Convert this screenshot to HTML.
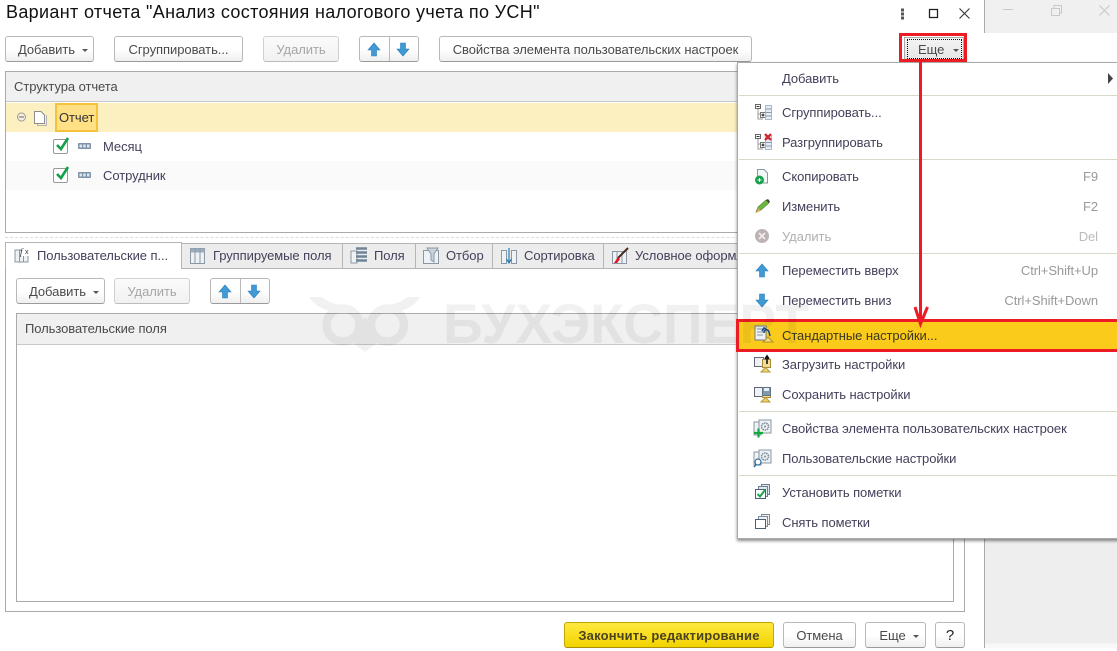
<!DOCTYPE html>
<html lang="ru"><head><meta charset="utf-8"><title>Вариант отчета</title>
<style>
html,body{margin:0;padding:0;background:#fff}
body{position:relative;width:1117px;height:651px;overflow:hidden;font-family:"Liberation Sans",Arial,sans-serif;font-size:13px;color:#4a4a4a}
.a,.t,.b{position:absolute;box-sizing:border-box}
.t{white-space:nowrap;line-height:14px;height:14px;letter-spacing:-.07px}
.b{height:26px;border:1px solid #b9b9b9;border-bottom-color:#9a9a9a;border-radius:3px;background:linear-gradient(#fff,#fff 50%,#efefef);text-align:center;line-height:25px;white-space:nowrap;letter-spacing:-.05px;color:#4a4a4a}
.dd{padding-left:7px}
.dis{color:#a6a6a6;border-color:#d0d0d0;border-bottom-color:#bbb;background:linear-gradient(#fbfbfb,#f1f1f1)}
.m{color:#45405a}
.sep{position:absolute;left:739px;right:0;height:1px;background:#dcd8c9}
.car{display:inline-block;width:0;height:0;border:3px solid transparent;border-top:3px solid #555;border-bottom:0;margin-left:7px;vertical-align:2px}
.tab{position:absolute;top:243px;height:26px;box-sizing:border-box;background:#ececec;border:1px solid #b5b5b5;border-left:0}
</style></head><body>

<div class="t" style="left:6px;top:1px;height:22px;line-height:22px;font-size:18px;color:#111;letter-spacing:.335px">Вариант отчета "Анализ состояния налогового учета по УСН"</div>

<!-- right background window -->
<div class="a" style="left:984px;top:0;width:133px;height:33px;background:#f0f0f0;border-left:1px solid #aaa"></div>
<div class="a" style="left:984px;top:539px;width:133px;height:109px;background:linear-gradient(#eee,#eee 96%,#f8f8f8 96%);border-left:1px solid #aaa"></div>

<!-- toolbar -->
<div class="b dd" style="left:5px;top:36px;width:89px">Добавить<i class="car"></i></div>
<div class="b" style="left:114px;top:36px;width:129px">Сгруппировать...</div>
<div class="b dis" style="left:263px;top:36px;width:76px">Удалить</div>
<div class="b" style="left:359px;top:36px;width:60px"></div>
<div class="a" style="left:389px;top:37px;width:1px;height:24px;background:#b9b9b9"></div>
<div class="b" style="left:439px;top:36px;width:313px">Свойства элемента пользовательских настроек</div>

<!-- structure panel -->
<div class="a" style="left:5px;top:71px;width:960px;height:162px;border:1px solid #aaa;background:#fff"></div>
<div class="a" style="left:6px;top:72px;width:958px;height:30px;background:#f0f0f0;border-bottom:1px solid #c8c8c8"></div>
<div class="t" style="left:14px;top:80px">Структура отчета</div>
<div class="a" style="left:6px;top:103px;width:958px;height:29px;background:#fdf0c0"></div>
<div class="a" style="left:55px;top:103px;width:43px;height:29px;background:#ffe084;border:2px solid #f5c33b"></div>
<div class="t" style="left:59px;top:111px;color:#333">Отчет</div>
<div class="a" style="left:6px;top:161px;width:958px;height:29px;background:#fafafa"></div>
<div class="t m" style="left:103px;top:140px">Месяц</div>
<div class="t m" style="left:103px;top:169px">Сотрудник</div>
<div class="a" style="left:53px;top:139px;width:15px;height:15px;border:1px solid #999;border-radius:2px;background:#fff"></div>
<div class="a" style="left:53px;top:168px;width:15px;height:15px;border:1px solid #999;border-radius:2px;background:#fff"></div>

<!-- tabs -->
<div class="a" style="left:5px;top:237px;width:960px;height:0;border-top:1px dashed #ddd"></div>
<div class="a" style="left:5px;top:268px;width:960px;height:344px;border:1px solid #aaa;background:#fff"></div>
<div class="tab" style="left:181px;width:162px"></div>
<div class="tab" style="left:343px;width:73px"></div>
<div class="tab" style="left:416px;width:77px"></div>
<div class="tab" style="left:493px;width:111px"></div>
<div class="tab" style="left:604px;width:140px"></div>
<div class="a" style="left:5px;top:242px;width:177px;height:27px;background:#fff;border:1px solid #b5b5b5;border-bottom:0"></div>
<div class="t m" style="left:37px;top:249px">Пользовательские п...</div>
<div class="t m" style="left:213px;top:249px">Группируемые поля</div>
<div class="t m" style="left:374px;top:249px">Поля</div>
<div class="t m" style="left:446px;top:249px">Отбор</div>
<div class="t m" style="left:524px;top:249px">Сортировка</div>
<div class="t m" style="left:635px;top:249px">Условное оформление</div>

<!-- inner toolbar -->
<div class="b dd" style="left:16px;top:278px;width:89px">Добавить<i class="car"></i></div>
<div class="b dis" style="left:114px;top:278px;width:76px">Удалить</div>
<div class="b" style="left:210px;top:278px;width:60px"></div>
<div class="a" style="left:240px;top:279px;width:1px;height:24px;background:#b9b9b9"></div>

<!-- inner table -->
<div class="a" style="left:16px;top:313px;width:938px;height:289px;border:1px solid #aaa;background:#fff"></div>
<div class="a" style="left:17px;top:314px;width:936px;height:31px;background:#f0f0f0;border-bottom:1px solid #c8c8c8"></div>
<div class="t" style="left:25px;top:322px">Пользовательские поля</div>

<!-- footer -->
<div class="b" style="left:564px;top:622px;width:210px;border-color:#c4a800;border-bottom-color:#a89000;background:linear-gradient(#ffe93f,#f2d300);font-weight:bold;color:#4a4320;letter-spacing:.2px">Закончить редактирование</div>
<div class="b" style="left:783px;top:622px;width:73px">Отмена</div>
<div class="b dd" style="left:865px;top:622px;width:61px">Еще<i class="car"></i></div>
<div class="b" style="left:935px;top:622px;width:30px;font-size:15px;color:#222">?</div>

<!-- Еще button active -->
<div class="a" style="left:904px;top:37px;width:60px;height:25px;background:linear-gradient(#f4f4f4,#e6e6e6);border:1px solid #aaa"></div>
<div class="a" style="left:907px;top:39px;width:55px;height:20px;border:1px dotted #111"></div>
<div class="t" style="left:918px;top:43px">Еще</div>
<div class="a" style="left:953px;top:49px;width:0;height:0;border:3px solid transparent;border-top:3px solid #555;border-bottom:0"></div>

<!-- dropdown menu -->
<div class="a" style="left:737px;top:62px;width:390px;height:477px;background:#fff;border:1px solid #aaa;box-shadow:0 2px 3px rgba(0,0,0,.45)"></div>
<div class="sep" style="top:95px"></div>
<div class="sep" style="top:159px"></div>
<div class="sep" style="top:253px"></div>
<div class="sep" style="top:411px"></div>
<div class="sep" style="top:475px"></div>
<div class="a" style="left:736px;top:319px;width:381px;height:33px;background:#fbcb1c;border:3px solid #ed1c24;border-right-width:0"></div>

<div class="t m" style="left:782px;top:72px">Добавить</div>
<div class="t m" style="left:782px;top:106px">Сгруппировать...</div>
<div class="t m" style="left:782px;top:136px">Разгруппировать</div>
<div class="t m" style="left:782px;top:170px">Скопировать</div>
<div class="t m" style="left:782px;top:200px">Изменить</div>
<div class="t" style="left:782px;top:230px;color:#b0b0b0">Удалить</div>
<div class="t m" style="left:782px;top:264px">Переместить вверх</div>
<div class="t m" style="left:782px;top:294px">Переместить вниз</div>
<div class="t" style="left:782px;top:329px;color:#3c3720">Стандартные настройки...</div>
<div class="t m" style="left:782px;top:358px">Загрузить настройки</div>
<div class="t m" style="left:782px;top:388px">Сохранить настройки</div>
<div class="t m" style="left:782px;top:422px">Свойства элемента пользовательских настроек</div>
<div class="t m" style="left:782px;top:452px">Пользовательские настройки</div>
<div class="t m" style="left:782px;top:486px">Установить пометки</div>
<div class="t m" style="left:782px;top:516px">Снять пометки</div>

<div class="t" style="right:19px;top:170px;color:#999">F9</div>
<div class="t" style="right:19px;top:200px;color:#999">F2</div>
<div class="t" style="right:19px;top:230px;color:#bbb">Del</div>
<div class="t" style="right:19px;top:264px;color:#999">Ctrl+Shift+Up</div>
<div class="t" style="right:19px;top:294px;color:#999">Ctrl+Shift+Down</div>

<!-- icons, watermark, callouts -->
<svg class="a" style="left:0;top:0" width="1117" height="651" viewBox="0 0 1117 651" fill="none">
<defs>
<path id="up" d="M0-7 6 0H2.500V6H-2.500V0H-6Z" fill="#3f9ad6" stroke="#2a7fb8" stroke-width=".6"/>
<path id="dn" d="M0 7 6 0H2.500V-6H-2.500V0H-6Z" fill="#3f9ad6" stroke="#2a7fb8" stroke-width=".6"/>
<g id="chk"><path d="M3 7 7 11 14 0" stroke="#14a04a" stroke-width="2.600"/></g>
<g id="fld"><rect x="0" y="0" width="13" height="6" rx="1" fill="#7f93a8"/><rect x="1.500" y="1.500" width="2.500" height="3" fill="#dfe6ee"/><rect x="5.200" y="1.500" width="2.500" height="3" fill="#dfe6ee"/><rect x="9" y="1.500" width="2.500" height="3" fill="#dfe6ee"/></g>
<g id="grp"><rect x=".5" y=".5" width="5" height="4" fill="#fff" stroke="#666"/><path d="M1.500 2.500H4.500" stroke="#333"/><path d="M3 5V15H8M3 10H6" stroke="#999"/><rect x="5.500" y="8.500" width="5" height="5" fill="#fff" stroke="#777"/><path d="M6.500 11H9.500M8 9.500V12.500" stroke="#111"/><rect x="10.500" y="1.500" width="6" height="14" fill="#e6ecf2" stroke="#a9bac9"/><path d="M10.500 5H16.500M10.500 8.500H16.500M10.500 12H16.500" stroke="#7f9bb5"/></g>
<g id="cfg"><rect x="0" y="2" width="7" height="13" fill="#eef2f5" stroke="#8a98a5"/><rect x="5" y="0" width="12" height="13" fill="#eef2f5" stroke="#8a98a5"/><circle cx="11" cy="6.500" r="3.500" stroke="#7d8a95" stroke-width="1.600" stroke-dasharray="1.500 .7"/><circle cx="11" cy="6.500" r="1" fill="#7d8a95"/></g>
<g id="tbl"><rect x="0" y="3" width="13" height="12" fill="#eef2f5" stroke="#8a98a5"/><path d="M4.500 3V15M8.500 3V15" stroke="#8a98a5"/></g>
<g id="set"><rect x=".5" y="1.500" width="9" height="9" fill="#eef2f5" stroke="#667"/><rect x="8.500" y="3.500" width="8" height="8" fill="#f2dc9a" stroke="#a88c3a"/><path d="M7 16 11.500 11.500 16 16Z" fill="#f3d26a" stroke="#b79a3d"/></g>
</defs>

<!-- window controls -->
<g fill="#555"><rect x="901" y="8.500" width="3" height="3"/><rect x="901" y="12.500" width="3" height="3"/><rect x="901" y="16.500" width="3" height="3"/></g>
<rect x="929.500" y="9.500" width="8" height="8" stroke="#222" stroke-width="1.300"/>
<path d="M959.500 8.500 969.500 18.500M969.500 8.500 959.500 18.500" stroke="#333" stroke-width="1.100"/>
<path d="M1003 9.500H1013" stroke="#c8c8c8"/>
<path d="M1051.500 8.500H1059.500V15.500H1051.500ZM1054 8V5.500H1061.500V13H1060" stroke="#c8c8c8"/>
<path d="M1099.500 5.500 1109.500 15.500M1109.500 5.500 1099.500 15.500" stroke="#c8c8c8" stroke-width="1.100"/>

<!-- toolbar arrows -->
<use href="#up" x="374" y="50"/><use href="#dn" x="403" y="49"/>
<use href="#up" x="225" y="292"/><use href="#dn" x="254" y="291"/>

<!-- tree -->
<circle cx="21.500" cy="117" r="4" fill="#f5f0e0" stroke="#999"/><path d="M19 117H24" stroke="#666"/>
<path d="M37.500 113.500V125.500H46.500V115" stroke="#b5b5b5"/><path d="M34.500 111.500H41L44.500 115V123.500H34.500Z" fill="#fff" stroke="#8d8d8d"/>
<use href="#chk" x="54" y="138"/><use href="#chk" x="54" y="167"/>
<use href="#fld" x="78" y="143"/><use href="#fld" x="78" y="172"/>

<!-- tab icons -->
<g transform="translate(15,247)"><use href="#tbl"/><rect x="6" y="0" width="10" height="9" fill="#fff"/><text x="5" y="8" font-size="9" fill="#333" font-family="Liberation Serif" font-style="italic">f</text><text x="10" y="7" font-size="7" fill="#333" font-family="Liberation Sans">x</text></g>
<g transform="translate(190,248)"><rect x=".5" y=".5" width="14" height="15" fill="#eef2f5" stroke="#8a98a5"/><rect x=".5" y=".5" width="14" height="4" fill="#9aabbb"/><path d="M5 .5V15.500M10 .5V15.500" stroke="#8a98a5"/></g>
<g transform="translate(351,247)"><rect x="0" y="4" width="6" height="12" fill="#eef2f5" stroke="#8a98a5"/><path d="M5 1.500H16M5 5.500H16M5 9.500H16M5 13.500H16" stroke="#6f8397" stroke-width="2.400"/></g>
<g transform="translate(423,247)"><rect x=".5" y="3.500" width="15" height="13" fill="#eef2f5" stroke="#8a98a5"/><path d="M4 1H15L11 7V15L8 13V7Z" fill="#c9d2da" stroke="#8a98a5"/></g>
<g transform="translate(501,247)"><rect x=".5" y="3.500" width="5" height="13" fill="#eef2f5" stroke="#8a98a5"/><rect x="10.500" y="3.500" width="5" height="13" fill="#eef2f5" stroke="#8a98a5"/><path d="M8 1V15M5.500 12 8 16 10.500 12" stroke="#2f7ab0" stroke-width="1.200"/></g>
<g transform="translate(612,247)"><rect x=".5" y="4.500" width="14" height="12" fill="#eef2f5" stroke="#8a98a5"/><path d="M5 4.500V16.500M10 4.500V16.500" stroke="#8a98a5"/><path d="M16 1 6 11" stroke="#4a2d20" stroke-width="2"/><path d="M2 16 6 10 8 12 5 16Z" fill="#e3141f"/></g>

<!-- menu icons -->
<use href="#grp" x="755" y="104"/>
<g transform="translate(755,134)"><use href="#grp"/><path d="M10 0 16 6M16 0 10 6" stroke="#d4202a" stroke-width="2.200"/></g>
<g transform="translate(755,169)"><path d="M2.500 .5H9L12.500 4V14H2.500Z" fill="#f4f6f8" stroke="#8a98a5"/><circle cx="4.500" cy="11" r="4.500" fill="#18a24d"/><path d="M2.500 11H6.500M4.500 9V13" stroke="#fff"/></g>
<g transform="translate(755,199)"><path d="M1 13 3 8 11 1 14 4 6 11Z" fill="#6fb63f" stroke="#47802a" stroke-width=".6"/><path d="M11 1 14 4 15 2.500 13 0Z" fill="#444"/><path d="M1 14 3 9 6 11.500Z" fill="#dca060"/></g>
<circle cx="762" cy="236" r="7" fill="#bdb3b3"/><path d="M759 233 765 239M765 233 759 239" stroke="#f2efef" stroke-width="1.600"/>
<use href="#up" x="762" y="271"/><use href="#dn" x="762" y="300"/>
<g transform="translate(754,326)"><path d="M1 0H12V14H1Z" fill="#eef2f5" stroke="#6d7f90"/><path d="M3 3H10M3 6H10M3 9H9" stroke="#8a98a5"/><path d="M9 16 14 11 19 16Z" fill="#f7dc7a" stroke="#b08e2c"/><path d="M10 7C10 3 14 3 15 6L16 10M8 5 10 2 13 4" stroke="#1c4e86" stroke-width="1.600"/></g>
<g transform="translate(754,356)"><use href="#set"/><path d="M13 0V8M11 3 13 0 15 3" stroke="#111" stroke-width="1.600"/></g>
<g transform="translate(754,386)"><use href="#set"/><rect x="8.500" y="1.500" width="8" height="8" fill="#7f98ae" stroke="#5f7488"/><rect x="10" y="2" width="5" height="3" fill="#e8eef3"/></g>
<g transform="translate(754,420)"><use href="#cfg"/><path d="M0 13H9M4.500 8.500V17.500" stroke="#12a83e" stroke-width="2.200"/></g>
<g transform="translate(754,450)"><use href="#cfg"/><circle cx="4" cy="12" r="3" fill="#fff" stroke="#2f6f9f" stroke-width="1.200"/><path d="M2 14.500 0 17" stroke="#2f6f9f" stroke-width="1.500"/></g>
<g transform="translate(755,484)"><rect x="6.500" y=".5" width="8" height="10" fill="#dfe7ef" stroke="#6d7f90"/><rect x="3.500" y="2.500" width="9" height="10" fill="#dfe7ef" stroke="#6d7f90"/><rect x=".5" y="5.500" width="10" height="9" fill="#fff" stroke="#4c6072"/><path d="M2.500 10 5 12.500 10 6" stroke="#19a34b" stroke-width="2"/></g>
<g transform="translate(755,514)"><rect x="6.500" y=".5" width="8" height="10" fill="#eef2f5" stroke="#7d8c9a"/><rect x="3.500" y="2.500" width="9" height="10" fill="#eef2f5" stroke="#7d8c9a"/><rect x=".5" y="5.500" width="10" height="9" fill="#fff" stroke="#4c6072"/></g>
<path d="M1108 73 1113 78.500 1108 84Z" fill="#444"/>

<!-- watermark -->
<g opacity=".05">
<circle cx="343" cy="325" r="16.500" stroke="#000" stroke-width="8.500"/>
<circle cx="387.500" cy="325" r="16.500" stroke="#000" stroke-width="8.500"/>
<g fill="#000">
<path d="M309 297H322C328 302 336 305 345 305V313C330 313 316 308 309 297Z"/>
<path d="M420 297H407C401 302 394 305 385 305V313C400 313 414 308 420 297Z"/>
<path d="M353 343 365 352 377 343 370 322 365 317 360 322Z"/>
<text x="443" y="343" font-family="Liberation Sans" font-weight="bold" font-size="56" textLength="366" lengthAdjust="spacingAndGlyphs">БУХЭКСПЕРТ</text>
</g>
</g>

<!-- red callouts -->
<rect x="900.500" y="34.500" width="65" height="26" stroke="#ed1c24" stroke-width="3"/>
<path d="M920.500 62V322M915 307 920.500 324 927.500 307" stroke="#ed1c24" stroke-width="3"/>
</svg>
</body></html>
